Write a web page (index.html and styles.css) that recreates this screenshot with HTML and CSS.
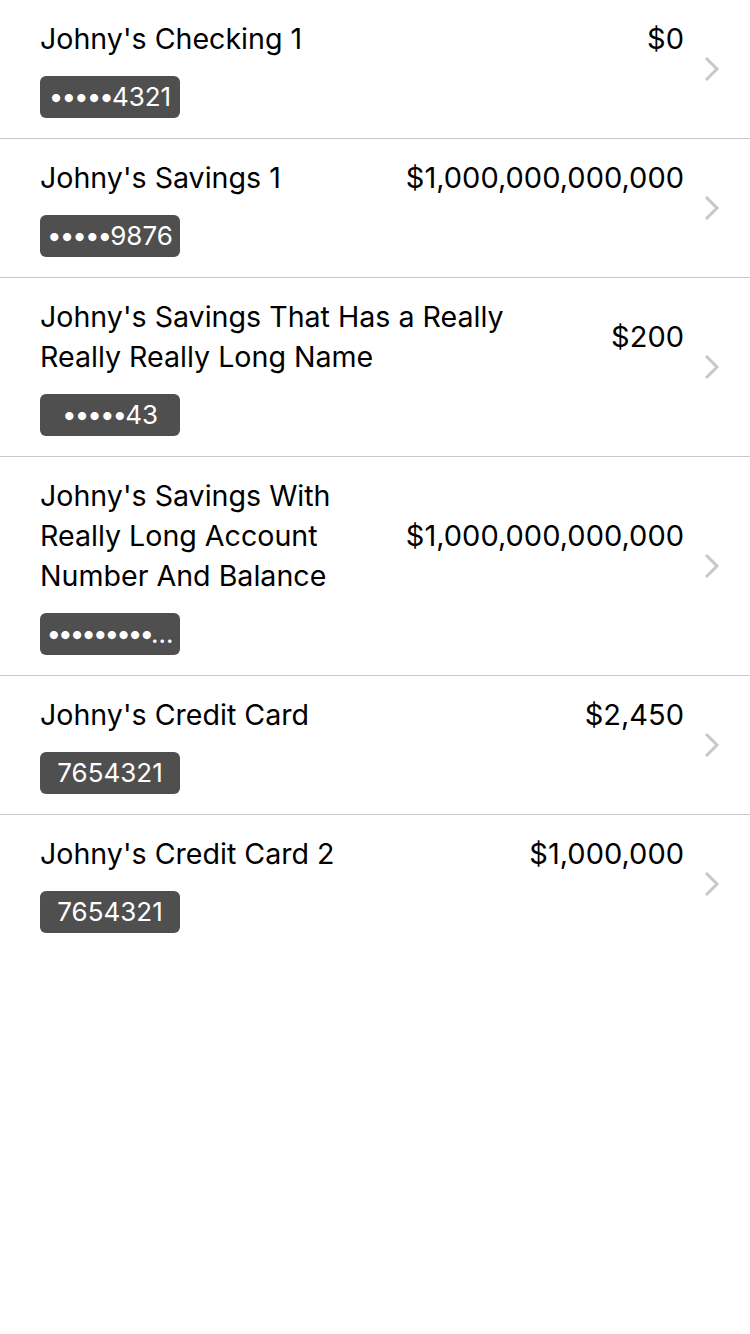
FILE: index.html
```html
<!DOCTYPE html>
<html>
<head>
<meta charset="utf-8">
<link rel="stylesheet" href="styles.css">
</head>
<body>
<ul class="list">
  <li class="row">
    <div class="main">
      <div class="top">
        <div class="title">Johny's Checking 1</div>
        <div class="amount">$0</div>
      </div>
      <div class="badge"><span class="dots">•••••</span>4321</div>
    </div>
    <svg class="chev" width="16" height="26" viewBox="0 0 16 26"><polyline points="2,2 13,13 2,24" fill="none" stroke="#c7c7cc" stroke-width="3"/></svg>
  </li>
  <li class="row">
    <div class="main">
      <div class="top">
        <div class="title">Johny's Savings 1</div>
        <div class="amount">$1,000,000,000,000</div>
      </div>
      <div class="badge"><span class="dots">•••••</span>9876</div>
    </div>
    <svg class="chev" width="16" height="26" viewBox="0 0 16 26"><polyline points="2,2 13,13 2,24" fill="none" stroke="#c7c7cc" stroke-width="3"/></svg>
  </li>
  <li class="row">
    <div class="main">
      <div class="top">
        <div class="title">Johny's Savings That Has a Really Really Really Long Name</div>
        <div class="amount">$200</div>
      </div>
      <div class="badge"><span class="dots">•••••</span>43</div>
    </div>
    <svg class="chev" width="16" height="26" viewBox="0 0 16 26"><polyline points="2,2 13,13 2,24" fill="none" stroke="#c7c7cc" stroke-width="3"/></svg>
  </li>
  <li class="row">
    <div class="main">
      <div class="top">
        <div class="title">Johny's Savings With Really Long Account Number And Balance</div>
        <div class="amount">$1,000,000,000,000</div>
      </div>
      <div class="badge"><span class="dots tight">•••••••••</span>…</div>
    </div>
    <svg class="chev" width="16" height="26" viewBox="0 0 16 26"><polyline points="2,2 13,13 2,24" fill="none" stroke="#c7c7cc" stroke-width="3"/></svg>
  </li>
  <li class="row">
    <div class="main">
      <div class="top">
        <div class="title">Johny's Credit Card</div>
        <div class="amount">$2,450</div>
      </div>
      <div class="badge">7654321</div>
    </div>
    <svg class="chev" width="16" height="26" viewBox="0 0 16 26"><polyline points="2,2 13,13 2,24" fill="none" stroke="#c7c7cc" stroke-width="3"/></svg>
  </li>
  <li class="row">
    <div class="main">
      <div class="top">
        <div class="title">Johny's Credit Card 2</div>
        <div class="amount">$1,000,000</div>
      </div>
      <div class="badge">7654321</div>
    </div>
    <svg class="chev" width="16" height="26" viewBox="0 0 16 26"><polyline points="2,2 13,13 2,24" fill="none" stroke="#c7c7cc" stroke-width="3"/></svg>
  </li>
</ul>
</body>
</html>
```
FILE: styles.css
```css
html, body {
  margin: 0;
  padding: 0;
  background: #ffffff;
}
body {
  font-family: Inter, "Noto Sans", sans-serif;
  color: #000;
}
.list {
  list-style: none;
  margin: 0;
  padding: 0;
}
.row {
  display: flex;
  align-items: center;
  padding: 19px 30px 20px 40px;
  border-bottom: 1px solid #c8c7cc;
}
.row:last-child {
  border-bottom: none;
}
.main {
  flex: 1;
  min-width: 0;
  display: flex;
  flex-direction: column;
  gap: 17px;
}
.top {
  display: flex;
  align-items: center;
  gap: 44px;
}
.title {
  flex: 1;
  min-width: 0;
  font-size: 28.6px;
  line-height: 40px;
}
.amount {
  flex: none;
  font-size: 29px;
  line-height: 40px;
  text-align: right;
}
.badge {
  width: 140px;
  height: 42px;
  box-sizing: border-box;
  padding: 0 4px;
  border-radius: 6px;
  background: #4f4f4f;
  color: #fff;
  font-size: 26px;
  line-height: 42px;
  text-align: center;
  white-space: nowrap;
  overflow: hidden;
}
.dots {
  letter-spacing: -2px;
}
.dots.tight {
  letter-spacing: -3px;
}
.chev {
  flex: none;
  margin-left: 20px;
}
```
